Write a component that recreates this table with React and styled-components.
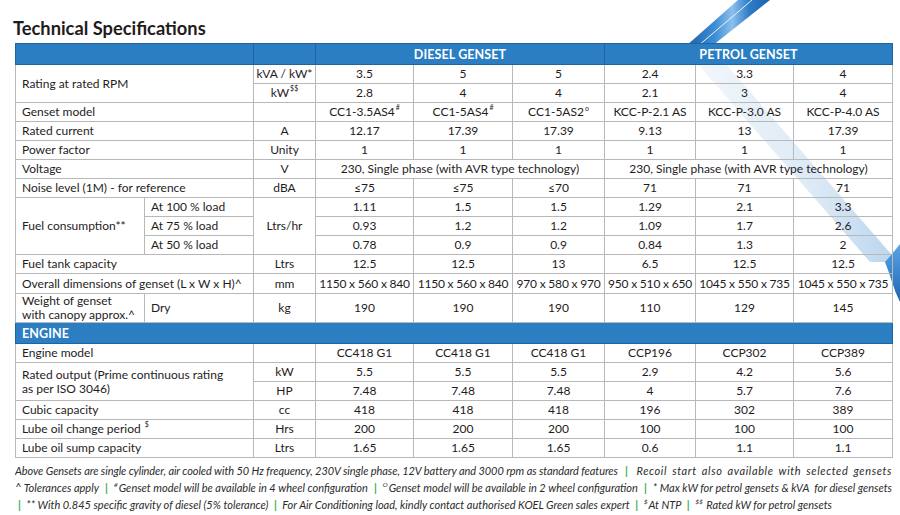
import React from "react";
import styled, { createGlobalStyle } from "styled-components";

const Global = createGlobalStyle`
  html, body { margin: 0; padding: 0; background: #fff; }
  body { font-family: Lato, "Open Sans", sans-serif; color: #1f1c1d; }
`;

const Page = styled.div`
  position: relative;
  width: 900px;
  height: 515px;
  overflow: hidden;
  padding-left: 15px;
  box-sizing: border-box;
`;

const Decoration = styled.svg`
  position: absolute;
  left: 0;
  top: 0;
  z-index: 0;
  pointer-events: none;
`;

const Content = styled.div`
  position: relative;
  z-index: 1;
`;

const Title = styled.h1`
  margin: 0 0 4px -2px;
  padding-top: 17px;
  height: 22px;
  line-height: 22px;
  font-size: 18.3px;
  font-weight: 700;
  color: #1f1c1d;
`;

const SpecTable = styled.table`
  width: 877px;
  table-layout: fixed;
  border-collapse: collapse;
  font-size: 12px;
`;

const HeadCell = styled.td`
  background: #2a7ec1;
  color: #fff;
  font-weight: 700;
  font-size: 12.5px;
  height: 20px;
  padding: 0 6px;
  text-align: ${(p) => p.$align || "center"};
  border: 1px solid #1f64a0;
  letter-spacing: 0.1px;
`;

const Cell = styled.td`
  height: ${(p) => p.$h || 18}px;
  padding: 0 ${(p) => (p.$align === "left" ? 6 : 2)}px;
  line-height: ${(p) => p.$lh || 14}px;
  text-align: ${(p) => p.$align || "center"};
  border: 1px solid #b8b8b8;
  white-space: nowrap;
  vertical-align: middle;
  letter-spacing: ${(p) => p.$ls || 0}px;
`;

const Sup = styled.sup`
  font-size: 7px;
  line-height: 0;
  vertical-align: ${(p) => p.$v || 6}px;
  margin-left: 1px;
`;

const Footer = styled.div`
  margin-top: 4px;
  width: 877px;
  font-style: italic;
  font-size: 11px;
  color: #2b2b2b;
`;

const FooterLine = styled.div`
  line-height: 17px;
  height: 17px;
  white-space: nowrap;
  display: flex;
  justify-content: ${(p) => (p.$justify ? "space-between" : "flex-start")};
  letter-spacing: ${(p) => p.$ls || 0}px;
  overflow: hidden;
`;

const Part = styled.span`
  letter-spacing: ${(p) => p.$ls || 0}px;
  word-spacing: ${(p) => p.$ws || 0}px;
  white-space: pre;
`;

const Sep = styled.span`
  color: #3aaa49;
  font-style: normal;
  font-weight: 700;
  margin: 0 ${(p) => p.$m ?? 3}px;
`;

const FSup = styled.sup`
  font-size: 6.5px;
  line-height: 0;
  vertical-align: 5px;
  margin-right: 1px;
`;

const diesel = "DIESEL GENSET";
const petrol = "PETROL GENSET";

const Vals = ({ v, ls }) => v.map((x, i) => <Cell key={i} $ls={ls}>{x}</Cell>);

export default function App() {
  const voltage = "230, Single phase (with AVR type technology)";
  return (
    <>
      <Global />
      <Page>
        <Decoration width="900" height="515" viewBox="0 0 900 515">
          <defs>
            <linearGradient id="band" x1="0" y1="0" x2="1" y2="0">
              <stop offset="0" stopColor="#1a5fa8" />
              <stop offset="0.35" stopColor="#3f8fd6" />
              <stop offset="0.55" stopColor="#8cc0ec" />
              <stop offset="0.75" stopColor="#2f7cc6" />
              <stop offset="1" stopColor="#1b63ad" />
            </linearGradient>
            <linearGradient id="stripe" x1="0" y1="0" x2="1" y2="0">
              <stop offset="0" stopColor="#f2f7fc" />
              <stop offset="0.6" stopColor="#dbe9f6" />
              <stop offset="1" stopColor="#b9d5ee" />
            </linearGradient>
            <linearGradient id="curl" x1="0" y1="0" x2="0" y2="1">
              <stop offset="0" stopColor="#5aa6e6" />
              <stop offset="1" stopColor="#1c66b2" />
            </linearGradient>
          </defs>
          <polygon points="738,0 770,0 712,46 686,46" fill="url(#band)" />
          <polyline points="752,0 698,46" stroke="#e6f2fc" strokeWidth="1" fill="none" />
          <polygon points="696,62 724,62 898,262 870,262" fill="url(#stripe)" />
          <path d="M885 262 Q893 253 900 244 L900 302 Q895 292 892 282 Q889 272 885 262 Z" fill="url(#curl)" />
        </Decoration>
        <Content>
          <Title>Technical Specifications</Title>
          <SpecTable>
            <colgroup>
              <col style={{ width: 129 }} />
              <col style={{ width: 109 }} />
              <col style={{ width: 62 }} />
              <col style={{ width: 98 }} />
              <col style={{ width: 99 }} />
              <col style={{ width: 92 }} />
              <col style={{ width: 91 }} />
              <col style={{ width: 98 }} />
              <col style={{ width: 99 }} />
            </colgroup>
            <tbody>
              <tr>
                <HeadCell colSpan={2} />
                <HeadCell />
                <HeadCell colSpan={3}>{diesel}</HeadCell>
                <HeadCell colSpan={3}>{petrol}</HeadCell>
              </tr>
              <tr>
                <Cell colSpan={2} rowSpan={2} $align="left">Rating at rated RPM</Cell>
                <Cell>kVA / kW*</Cell>
                <Vals v={["3.5", "5", "5", "2.4", "3.3", "4"]} />
              </tr>
              <tr>
                <Cell>kW<Sup>$$</Sup></Cell>
                <Vals v={["2.8", "4", "4", "2.1", "3", "4"]} />
              </tr>
              <tr>
                <Cell colSpan={2} $align="left">Genset model</Cell>
                <Cell />
                <Cell>CC1-3.5AS4<Sup>#</Sup></Cell>
                <Cell>CC1-5AS4<Sup>#</Sup></Cell>
                <Cell>CC1-5AS2<Sup $v={5}>o</Sup></Cell>
                <Cell>KCC-P-2.1 AS</Cell>
                <Cell>KCC-P-3.0 AS</Cell>
                <Cell>KCC-P-4.0 AS</Cell>
              </tr>
              <tr>
                <Cell colSpan={2} $align="left">Rated current</Cell>
                <Cell>A</Cell>
                <Vals v={["12.17", "17.39", "17.39", "9.13", "13", "17.39"]} />
              </tr>
              <tr>
                <Cell colSpan={2} $align="left">Power factor</Cell>
                <Cell>Unity</Cell>
                <Vals v={["1", "1", "1", "1", "1", "1"]} />
              </tr>
              <tr>
                <Cell colSpan={2} $align="left">Voltage</Cell>
                <Cell>V</Cell>
                <Cell colSpan={3}>{voltage}</Cell>
                <Cell colSpan={3}>{voltage}</Cell>
              </tr>
              <tr>
                <Cell colSpan={2} $align="left">Noise level (1M) - for reference</Cell>
                <Cell>dBA</Cell>
                <Vals v={["≤75", "≤75", "≤70", "71", "71", "71"]} />
              </tr>
              <tr>
                <Cell rowSpan={3} $align="left">Fuel consumption**</Cell>
                <Cell $align="left">At 100 % load</Cell>
                <Cell rowSpan={3}>Ltrs/hr</Cell>
                <Vals v={["1.11", "1.5", "1.5", "1.29", "2.1", "3.3"]} />
              </tr>
              <tr>
                <Cell $align="left">At 75 % load</Cell>
                <Vals v={["0.93", "1.2", "1.2", "1.09", "1.7", "2.6"]} />
              </tr>
              <tr>
                <Cell $align="left">At 50 % load</Cell>
                <Vals v={["0.78", "0.9", "0.9", "0.84", "1.3", "2"]} />
              </tr>
              <tr>
                <Cell colSpan={2} $align="left">Fuel tank capacity</Cell>
                <Cell>Ltrs</Cell>
                <Vals v={["12.5", "12.5", "13", "6.5", "12.5", "12.5"]} />
              </tr>
              <tr>
                <Cell colSpan={2} $align="left" $h={19}>Overall dimensions of genset (L x W x H)^</Cell>
                <Cell $h={19}>mm</Cell>
                <Vals ls={-0.2} v={["1150 x 560 x 840", "1150 x 560 x 840", "970 x 580 x 970", "950 x 510 x 650", "1045 x 550 x 735", "1045 x 550 x 735"]} />
              </tr>
              <tr>
                <Cell $align="left" $h={28} $lh={14}>Weight of genset<br />with canopy approx.^</Cell>
                <Cell $align="left" $h={28}>Dry</Cell>
                <Cell $h={28}>kg</Cell>
                <Vals v={["190", "190", "190", "110", "129", "145"]} />
              </tr>
              <tr>
                <HeadCell colSpan={9} $align="left">ENGINE</HeadCell>
              </tr>
              <tr>
                <Cell colSpan={2} $align="left">Engine model</Cell>
                <Cell />
                <Vals v={["CC418 G1", "CC418 G1", "CC418 G1", "CCP196", "CCP302", "CCP389"]} />
              </tr>
              <tr>
                <Cell colSpan={2} rowSpan={2} $align="left" $lh={14}>Rated output (Prime continuous rating<br />as per ISO 3046)</Cell>
                <Cell>kW</Cell>
                <Vals v={["5.5", "5.5", "5.5", "2.9", "4.2", "5.6"]} />
              </tr>
              <tr>
                <Cell>HP</Cell>
                <Vals v={["7.48", "7.48", "7.48", "4", "5.7", "7.6"]} />
              </tr>
              <tr>
                <Cell colSpan={2} $align="left">Cubic capacity</Cell>
                <Cell>cc</Cell>
                <Vals v={["418", "418", "418", "196", "302", "389"]} />
              </tr>
              <tr>
                <Cell colSpan={2} $align="left">Lube oil change period <Sup>$</Sup></Cell>
                <Cell>Hrs</Cell>
                <Vals v={["200", "200", "200", "100", "100", "100"]} />
              </tr>
              <tr>
                <Cell colSpan={2} $align="left">Lube oil sump capacity</Cell>
                <Cell>Ltrs</Cell>
                <Vals v={["1.65", "1.65", "1.65", "0.6", "1.1", "1.1"]} />
              </tr>
            </tbody>
          </SpecTable>
          <Footer>
            <FooterLine $justify>
              <span>
                <Part $ls={-0.08}>Above Gensets are single cylinder, air cooled with 50 Hz frequency, 230V single phase, 12V battery and 3000 rpm as standard features</Part>
                <Sep $m={7}>|</Sep>
              </span>
              <Part $ls={0.6} $ws={2}>Recoil start also available with selected gensets</Part>
            </FooterLine>
            <FooterLine $justify $ls={-0.15}>
              <Part>^ Tolerances apply</Part>
              <Sep>|</Sep>
              <Part><FSup>#</FSup>Genset model will be available in 4 wheel configuration</Part>
              <Sep>|</Sep>
              <Part><FSup>O</FSup>Genset model will be available in 2 wheel configuration</Part>
              <Sep>|</Sep>
              <Part>* Max kW for petrol gensets &amp; kVA  for diesel gensets</Part>
            </FooterLine>
            <FooterLine $ls={-0.1}>
              <Sep>|</Sep>
              <Part> ** With 0.845 specific gravity of diesel (5% tolerance) </Part>
              <Sep>|</Sep>
              <Part> For Air Conditioning load, kindly contact authorised KOEL Green sales expert </Part>
              <Sep>|</Sep>
              <Part> <FSup>$</FSup>At NTP </Part>
              <Sep>|</Sep>
              <Part> <FSup>$$</FSup> Rated kW for petrol gensets</Part>
            </FooterLine>
          </Footer>
        </Content>
      </Page>
    </>
  );
}
